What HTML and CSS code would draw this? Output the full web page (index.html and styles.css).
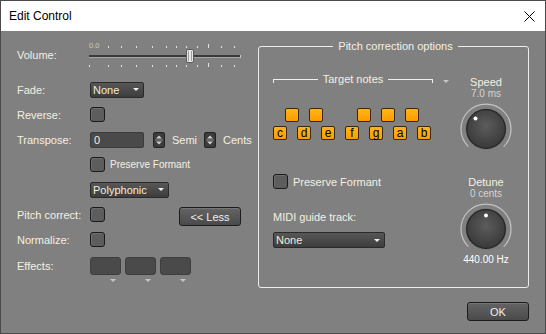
FILE: index.html
```html
<!DOCTYPE html>
<html lang="en">
<head>
    <meta charset="UTF-8">
    <title>Edit Control</title>
    <link rel="stylesheet" href="styles.css">
</head>
<body>
<div class="window">
    <div class="titlebar">
        <span class="title">Edit Control</span>
        <svg class="close" width="11" height="11" viewBox="0 0 11 11">
            <path d="M0.5 0.5L10.5 10.5M10.5 0.5L0.5 10.5" stroke="#000" stroke-width="1" fill="none"/>
        </svg>
    </div>

    <div class="main">
        <!-- Columna izquierda -->
        <div class="left-panel">
            <div class="row row-volume">
                <span class="label">Volume:</span>
                <svg class="slider" width="156" height="30" viewBox="0 0 156 30">
                    <text x="1" y="7.5" font-size="7.5" fill="#c8c8c8" font-family="Liberation Sans, sans-serif">0.0</text>
                    <g fill="#e2e2e2">
                        <rect x="20" y="6" width="1" height="2"/>
                        <rect x="33" y="6" width="1" height="2"/>
                        <rect x="48" y="6" width="1" height="2"/>
                        <rect x="64" y="6" width="1" height="2"/>
                        <rect x="78" y="6" width="1" height="2"/>
                        <rect x="88" y="6" width="1" height="2"/>
                        <rect x="98" y="6" width="1" height="2"/>
                        <rect x="109" y="6" width="1" height="2"/>
                        <rect x="120" y="4" width="1" height="4"/>
                        <rect x="133" y="6" width="1" height="2"/>
                        <rect x="146" y="6" width="1" height="2"/>

                        <rect x="1" y="25" width="1" height="2"/>
                        <rect x="20" y="25" width="1" height="2"/>
                        <rect x="33" y="25" width="1" height="2"/>
                        <rect x="48" y="25" width="1" height="2"/>
                        <rect x="64" y="25" width="1" height="2"/>
                        <rect x="78" y="25" width="1" height="2"/>
                        <rect x="88" y="25" width="1" height="2"/>
                        <rect x="98" y="25" width="1" height="2"/>
                        <rect x="109" y="25" width="1" height="2"/>
                        <rect x="120" y="23" width="1" height="4"/>
                        <rect x="133" y="25" width="1" height="2"/>
                        <rect x="146" y="25" width="1" height="2"/>
                    </g>
                    <rect x="1" y="15" width="152" height="2" fill="#3a3a3a"/>
                    <rect x="1" y="17" width="152" height="1" fill="#a6a6a6"/>
                    <rect x="152" y="15" width="1" height="3" fill="#c4c4c4"/>
                    <rect x="98.5" y="9.5" width="7" height="13" rx="1.5" fill="#e8e8e8" stroke="#5a5a5a"/>
                    <path d="M100.5 11V21M103.5 11V21" stroke="#9c9c9c" stroke-width="1"/>
                </svg>
            </div>

            <div class="row">
                <span class="label">Fade:</span>
                <div class="dropdown dd-fade"><span>None</span><i class="caret"></i></div>
            </div>

            <div class="row">
                <span class="label">Reverse:</span>
                <span class="check"></span>
            </div>

            <div class="row">
                <span class="label">Transpose:</span>
                <div class="textbox">0</div>
                <span class="spin">
                    <svg width="12" height="16" viewBox="0 0 12 16">
                        <path d="M3 6.5H9L6 3.5Z" fill="#cfcfcf"/>
                        <path d="M2 8H10" stroke="#8a8a8a" stroke-width="1"/>
                        <path d="M3 9.5H9L6 12.5Z" fill="#cfcfcf"/>
                    </svg>
                </span>
                <span class="spin-label">Semi</span>
                <span class="spin">
                    <svg width="12" height="16" viewBox="0 0 12 16">
                        <path d="M3 6.5H9L6 3.5Z" fill="#cfcfcf"/>
                        <path d="M2 8H10" stroke="#8a8a8a" stroke-width="1"/>
                        <path d="M3 9.5H9L6 12.5Z" fill="#cfcfcf"/>
                    </svg>
                </span>
                <span class="spin-label">Cents</span>
            </div>

            <div class="row">
                <span class="label"></span>
                <span class="check"></span>
                <span class="small-text">Preserve Formant</span>
            </div>

            <div class="row">
                <span class="label"></span>
                <div class="dropdown dd-poly"><span>Polyphonic</span><i class="caret"></i></div>
            </div>

            <div class="row">
                <span class="label">Pitch correct:</span>
                <span class="check"></span>
                <button class="btn btn-less">&lt;&lt; Less</button>
            </div>

            <div class="row">
                <span class="label">Normalize:</span>
                <span class="check"></span>
            </div>

            <div class="row row-effects">
                <span class="label">Effects:</span>
                <div class="fx-slot"><span class="fx-box"></span><i class="caret caret-grey"></i></div>
                <div class="fx-slot"><span class="fx-box"></span><i class="caret caret-grey"></i></div>
                <div class="fx-slot"><span class="fx-box"></span><i class="caret caret-grey"></i></div>
            </div>
        </div>

        <!-- Opciones de corrección de tono -->
        <fieldset class="group">
            <legend>Pitch correction options</legend>
            <div class="group-inner">
                <div class="notes-col">
                    <div class="tn-row">
                        <div class="tn-bracket">
                            <span class="tn-line tn-left"></span>
                            <span class="tn-label">Target notes</span>
                            <span class="tn-line tn-right"></span>
                        </div>
                        <i class="caret caret-grey tn-arrow"></i>
                    </div>

                    <div class="keys">
                        <div class="key-row black-row">
                            <span class="key"></span>
                            <span class="key"></span>
                            <span class="key skip"></span>
                            <span class="key"></span>
                            <span class="key"></span>
                        </div>
                        <div class="key-row white-row">
                            <span class="key">c</span>
                            <span class="key">d</span>
                            <span class="key">e</span>
                            <span class="key">f</span>
                            <span class="key">g</span>
                            <span class="key">a</span>
                            <span class="key">b</span>
                        </div>
                    </div>

                    <div class="pf-row">
                        <span class="check"></span>
                        <span>Preserve Formant</span>
                    </div>

                    <div class="midi-label">MIDI guide track:</div>
                    <div class="dropdown dd-midi"><span>None</span><i class="caret"></i></div>
                </div>

                <div class="knob-col">
                    <div class="k-title">Speed</div>
                    <div class="k-value">7.0 ms</div>
                    <svg class="knob" width="54" height="50" viewBox="0 0 54 50">
                        <defs>
                            <radialGradient id="knobA" cx="50%" cy="42%" r="60%">
                                <stop offset="0" stop-color="#5c5c5c"/>
                                <stop offset="1" stop-color="#383838"/>
                            </radialGradient>
                        </defs>
                        <path d="M9.3 44.7A25 25 0 1 1 44.7 44.7" fill="none" stroke="#c2c2c2" stroke-width="1.2"/>
                        <circle cx="27" cy="27" r="20.5" fill="#6c6c6c"/>
                        <circle cx="27" cy="27" r="19.3" fill="url(#knobA)" stroke="#242424" stroke-width="1.2"/>
                        <circle cx="16.5" cy="16.5" r="2" fill="#fff"/>
                    </svg>

                    <div class="k-title k-detune">Detune</div>
                    <div class="k-value">0 cents</div>
                    <svg class="knob" width="54" height="50" viewBox="0 0 54 50">
                        <defs>
                            <radialGradient id="knobB" cx="50%" cy="42%" r="60%">
                                <stop offset="0" stop-color="#5c5c5c"/>
                                <stop offset="1" stop-color="#383838"/>
                            </radialGradient>
                        </defs>
                        <path d="M9.3 44.7A25 25 0 1 1 44.7 44.7" fill="none" stroke="#c2c2c2" stroke-width="1.2"/>
                        <circle cx="27" cy="27" r="20.5" fill="#6c6c6c"/>
                        <circle cx="27" cy="27" r="19.3" fill="url(#knobB)" stroke="#242424" stroke-width="1.2"/>
                        <circle cx="27" cy="13.5" r="2" fill="#fff"/>
                    </svg>
                    <div class="k-hz">440.00 Hz</div>
                </div>
            </div>
        </fieldset>
    </div>

    <div class="footer">
        <button class="btn btn-ok">OK</button>
    </div>
</div>
</body>
</html>
```

FILE: styles.css
```css
* {
    box-sizing: border-box;
}

body {
    margin: 0;
    font-family: "Liberation Sans", Arial, sans-serif;
    font-size: 11px;
    background: #808080;
}

.window {
    width: 546px;
    height: 334px;
    border: 1px solid #4a4a4a;
    background: #808080;
    color: #f4f0e2;
    overflow: hidden;
}

/* Barra de título */
.titlebar {
    height: 30px;
    background: #fff;
    display: flex;
    align-items: center;
    justify-content: space-between;
    padding: 0 10px 0 8px;
}

.title {
    font-size: 12px;
    color: #000;
}

.close {
    display: block;
}

.main {
    display: flex;
    height: 261px;
}

/* Columna izquierda */
.left-panel {
    width: 257px;
    padding-left: 16px;
}

.row {
    display: flex;
    align-items: center;
    height: 25px;
}

.row-volume {
    height: 36px;
    margin-top: 6px;
    margin-bottom: 4px;
}

.label {
    width: 73px;
    flex-shrink: 0;
}

.slider {
    display: block;
    margin-left: -2px;
}

.dropdown {
    display: flex;
    align-items: center;
    justify-content: space-between;
    height: 16px;
    padding: 0 4px 0 2px;
    background: linear-gradient(#575757, #3d3d3d);
    border: 1px solid #2a2a2a;
    border-radius: 2px;
    color: #f4eed8;
    font-size: 11px;
}

.dd-fade {
    width: 54px;
}

.dd-poly {
    width: 79px;
}

.dd-midi {
    width: 112px;
    margin-top: 8px;
}

.caret {
    width: 0;
    height: 0;
    border-left: 3px solid transparent;
    border-right: 3px solid transparent;
    border-top: 3px solid #f0f0f0;
}

.caret-grey {
    border-top-color: #c6c6c6;
}

.check {
    display: inline-block;
    width: 15px;
    height: 15px;
    flex-shrink: 0;
    background: #5d5d5d;
    border: 1px solid #1a1a1a;
    border-radius: 3px;
    box-shadow: inset 1px 1px 0 #6e6e6e;
}

.textbox {
    width: 54px;
    height: 16px;
    padding-left: 3px;
    line-height: 14px;
    background: #4a4a4a;
    border: 1px solid #3a3a3a;
    border-radius: 2px;
    color: #f4eed8;
}

.spin {
    display: block;
    width: 12px;
    height: 16px;
    margin-left: 9px;
    background: #3c3c3c;
    border: 1px solid #222;
    border-radius: 2px;
    overflow: hidden;
}

.spin svg {
    display: block;
    margin: -1px 0 0 -1px;
}

.spin-label {
    margin-left: 7px;
}

.spin-label + .spin {
    margin-left: 7px;
}

.small-text {
    font-size: 10px;
    margin-left: 5px;
}

.btn {
    font-family: "Liberation Sans", Arial, sans-serif;
    font-size: 11px;
    color: #f0f0f0;
    background: linear-gradient(#646464, #4a4a4a);
    border: 1px solid #1c1c1c;
    border-radius: 3px;
    box-shadow: inset 0 1px 0 #777;
    padding: 0;
    cursor: pointer;
}

.btn-less {
    width: 62px;
    height: 19px;
    margin-left: 74px;
    align-self: flex-start;
    margin-top: 5px;
}

.row-effects {
    align-items: flex-start;
}

.row-effects .label {
    line-height: 18px;
    margin-top: 5px;
}

.fx-slot {
    display: flex;
    flex-direction: column;
    margin-top: 5px;
    margin-right: 4px;
}

.fx-box {
    display: block;
    width: 31px;
    height: 18px;
    background: #4a4a4a;
    border: 1px solid #3e3e3e;
    border-radius: 3px;
}

.fx-slot .caret {
    align-self: flex-end;
    margin: 4px 5px 0 0;
}

/* Grupo de corrección de tono */
.group {
    width: 271px;
    height: 249px;
    margin: 8px 0 0 0;
    padding: 0 10px 0 14px;
    border: 1px solid #ececec;
    border-radius: 3px;
    min-width: 0;
}

.group legend {
    margin: 0 auto;
    padding: 0 5px;
    line-height: 14px;
}

.group-inner {
    display: flex;
}

.notes-col {
    width: 181px;
}

.tn-row {
    display: flex;
    align-items: flex-start;
    margin-top: 19px;
}

.tn-bracket {
    display: flex;
    gap: 5px;
    width: 160px;
}

.tn-line {
    flex: 1;
    height: 4px;
    margin-top: 7px;
    border-top: 1px solid #f0f0f0;
}

.tn-left {
    border-left: 1px solid #f0f0f0;
}

.tn-right {
    border-right: 1px solid #f0f0f0;
}

.tn-label {
    line-height: 14px;
}

.tn-arrow {
    margin: 8px 0 0 10px;
}

.keys {
    margin-top: 22px;
}

.key-row {
    display: flex;
    gap: 10px;
}

.black-row {
    margin-left: 12px;
}

.white-row {
    margin-top: 4px;
}

.key {
    width: 14px;
    height: 14px;
    border: 1px solid #3a2800;
    border-radius: 2px;
    background: linear-gradient(#ffb51c, #ff9c00);
    color: #000;
    font-size: 12px;
    line-height: 12px;
    text-align: center;
}

.key.skip {
    margin-left: 24px;
}

.pf-row {
    display: flex;
    align-items: center;
    gap: 5px;
    margin-top: 34px;
}

.midi-label {
    margin-top: 21px;
    line-height: 14px;
}

.knob-col {
    width: 64px;
    text-align: center;
}

.k-title {
    margin-top: 23px;
    line-height: 12px;
}

.k-detune {
    margin-top: 24px;
}

.k-value {
    font-size: 10px;
    line-height: 12px;
    color: #d4d4d4;
}

.knob {
    display: block;
    margin: 2px auto 0;
}

.k-hz {
    margin-top: 2px;
    font-size: 10px;
    line-height: 12px;
    color: #fff;
}

.footer {
    display: flex;
    justify-content: flex-end;
    padding: 10px 16px 0 0;
}

.btn-ok {
    width: 62px;
    height: 19px;
}
```
